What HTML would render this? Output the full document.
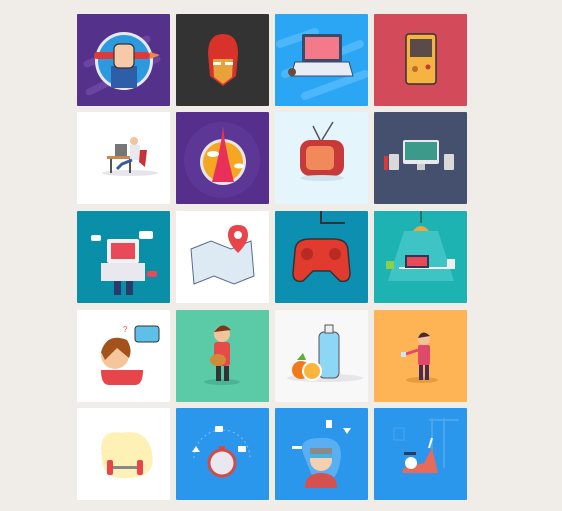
<!DOCTYPE html>
<html><head><meta charset="utf-8"><style>
html,body{margin:0;padding:0;width:562px;height:511px;background:#f0ede9;overflow:hidden}
.t{position:absolute;width:93px;height:92px;overflow:hidden;border-radius:1px}
.t svg{width:93px;height:92px;display:block}
</style></head><body>
<!-- row 1 -->
<div class="t" style="left:77px;top:14px;background:#54318a"><svg viewBox="0 0 93 92">
<path d="M10 50 L70 25 M12 78 L80 45" stroke="#6a44a3" stroke-width="7" stroke-linecap="round"/>
<circle cx="47" cy="47" r="29" fill="#e8e8f0"/><circle cx="47" cy="47" r="26" fill="#2d9ae0"/>
<rect x="34" y="52" width="26" height="22" fill="#2f5ea8"/>
<rect x="17" y="38" width="56" height="7" rx="3" fill="#e0393b"/><path d="M73 38 L83 41 L73 45Z" fill="#f08a3a"/>
<rect x="37" y="30" width="20" height="24" rx="5" fill="#f6c9a8" stroke="#333" stroke-width="1.2"/>
</svg></div>
<div class="t" style="left:176px;top:14px;background:#333333"><svg viewBox="0 0 93 92">
<path d="M32 40 Q32 20 47 20 Q62 20 62 40 L60 62 L47 72 L34 62Z" fill="#d8322a"/>
<path d="M37 45 L57 45 L56 63 L47 70 L38 63Z" fill="#e9a23b"/>
<rect x="37" y="48" width="8" height="3" fill="#fff"/><rect x="49" y="48" width="8" height="3" fill="#fff"/>
</svg></div>
<div class="t" style="left:275px;top:14px;background:#2ba6f5"><svg viewBox="0 0 93 92">
<path d="M5 30 L40 18 M10 60 L85 30 M30 82 L90 60" stroke="#4cb7fa" stroke-width="8" stroke-linecap="round"/>
<rect x="27" y="20" width="40" height="28" rx="2" fill="#3a4a6a"/><rect x="30" y="23" width="34" height="22" fill="#f47a8a"/>
<path d="M20 48 L74 48 L78 62 L16 62Z" fill="#e8edf5" stroke="#3a4a6a"/>
<circle cx="17" cy="58" r="4" fill="#6a4a3a"/>
</svg></div>
<div class="t" style="left:374px;top:14px;background:#d34a5a"><svg viewBox="0 0 93 92">
<rect x="32" y="20" width="30" height="50" rx="3" fill="#f5b342" stroke="#333" stroke-width="1.5"/>
<rect x="36" y="25" width="22" height="18" fill="#5a4a4a"/>
<circle cx="41" cy="55" r="3" fill="#c46a2a"/><circle cx="54" cy="53" r="2.5" fill="#c43a3a"/>
</svg></div>
<!-- row 2 -->
<div class="t" style="left:77px;top:112px;background:#ffffff"><svg viewBox="0 0 93 92">
<ellipse cx="53" cy="61" rx="28" ry="3" fill="#e6e6ea"/>
<rect x="30" y="44" width="30" height="3" fill="#c8894a"/><rect x="38" y="32" width="12" height="12" fill="#777"/>
<rect x="33" y="47" width="2" height="14" fill="#555"/><rect x="52" y="47" width="2" height="14" fill="#555"/>
<circle cx="57" cy="29" r="4" fill="#f1c49d"/><rect x="53" y="33" width="10" height="15" fill="#e8e8ef"/>
<path d="M63 38 L70 38 L68 55 L62 50Z" fill="#c8323a"/>
<path d="M55 48 L45 52 L40 57" stroke="#3a5aa0" stroke-width="3" fill="none"/>
</svg></div>
<div class="t" style="left:176px;top:112px;background:#552f8b"><svg viewBox="0 0 93 92">
<circle cx="46" cy="48" r="38" fill="#5d3795"/>
<circle cx="47" cy="50" r="23" fill="#e6e6e6"/><circle cx="47" cy="50" r="20" fill="#f5a623"/>
<path d="M47 14 L49 30 L53 50 L58 70 L36 70 L41 50 L45 30Z" fill="#e8305a"/>
<ellipse cx="37" cy="42" rx="6" ry="3" fill="#fff"/><ellipse cx="63" cy="54" rx="5" ry="2.5" fill="#fff"/>
</svg></div>
<div class="t" style="left:275px;top:112px;background:#e5f5fc"><svg viewBox="0 0 93 92">
<path d="M45 28 L38 14 M47 28 L58 10" stroke="#555" stroke-width="1.5"/>
<rect x="25" y="28" width="44" height="36" rx="10" fill="#c83a3a"/>
<rect x="31" y="34" width="28" height="24" rx="5" fill="#f08a5a"/>
<ellipse cx="47" cy="66" rx="22" ry="3" fill="#cfe3ee"/>
</svg></div>
<div class="t" style="left:374px;top:112px;background:#45506e"><svg viewBox="0 0 93 92">
<rect x="29" y="28" width="36" height="24" rx="2" fill="#e8e8ee"/><rect x="31" y="30" width="32" height="18" fill="#3c9a8a"/>
<rect x="43" y="52" width="8" height="6" fill="#ccc"/>
<rect x="15" y="42" width="10" height="16" rx="1" fill="#d9d9d9"/><rect x="70" y="42" width="10" height="16" rx="1" fill="#d9d9d9"/>
<rect x="10" y="44" width="4" height="14" fill="#d83a3a"/>
</svg></div>
<!-- row 3 -->
<div class="t" style="left:77px;top:211px;background:#0a8fa8"><svg viewBox="0 0 93 92">
<rect x="30" y="28" width="32" height="24" rx="2" fill="#f2f2f2"/><rect x="34" y="32" width="24" height="16" fill="#e84a5a"/>
<rect x="24" y="52" width="44" height="18" fill="#e8e8ee"/>
<rect x="37" y="70" width="7" height="14" fill="#2a3a6a"/><rect x="49" y="70" width="7" height="14" fill="#2a3a6a"/>
<rect x="62" y="20" width="14" height="8" rx="2" fill="#fff"/><rect x="14" y="24" width="10" height="6" rx="2" fill="#fff"/><rect x="70" y="60" width="10" height="6" rx="2" fill="#e84a5a"/>
</svg></div>
<div class="t" style="left:176px;top:211px;background:#ffffff"><svg viewBox="0 0 93 92">
<path d="M15 38 L35 30 L55 38 L75 30 L78 65 L58 73 L38 65 L18 73Z" fill="#dde9f3" stroke="#5a6a8a"/>
<path d="M62 14 Q72 14 72 24 Q72 32 62 42 Q52 32 52 24 Q52 14 62 14Z" fill="#e8454a"/><circle cx="62" cy="24" r="4" fill="#fff"/>
</svg></div>
<div class="t" style="left:275px;top:211px;background:#0c8fb0"><svg viewBox="0 0 93 92">
<path d="M46 0 L46 12 L70 12" stroke="#333" stroke-width="2" fill="none"/>
<path d="M20 40 Q20 28 35 28 L58 28 Q73 28 73 40 L75 62 Q75 72 65 70 L55 60 L38 60 L28 70 Q18 72 18 62Z" fill="#e13a2f" stroke="#333" stroke-width="1.5"/>
<circle cx="32" cy="43" r="6" fill="#b82a22"/><circle cx="60" cy="43" r="6" fill="#b82a22"/>
</svg></div>
<div class="t" style="left:374px;top:211px;background:#1eb3b3"><svg viewBox="0 0 93 92">
<path d="M47 0 V12" stroke="#333"/><path d="M39 20 Q47 10 55 20Z" fill="#f3a43a"/>
<path d="M30 20 L64 20 L80 70 L14 70Z" fill="#3ec4c4"/>
<rect x="25" y="56" width="50" height="2" fill="#fff"/>
<rect x="31" y="44" width="24" height="13" fill="#2a3a5a"/><rect x="33" y="46" width="20" height="9" fill="#e84a5a"/>
<rect x="12" y="50" width="8" height="8" fill="#8ad04a"/><rect x="73" y="48" width="8" height="10" fill="#eee"/>
</svg></div>
<!-- row 4 -->
<div class="t" style="left:77px;top:310px;background:#ffffff"><svg viewBox="0 0 93 92">
<path d="M24 60 Q24 75 32 75 L58 75 Q66 75 66 60Z" fill="#e8454a"/>
<circle cx="38" cy="45" r="14" fill="#f5c59b"/><path d="M24 42 Q30 22 50 30 Q56 40 52 48 L40 38 L28 50Z" fill="#a3521c"/>
<rect x="58" y="16" width="24" height="16" rx="3" fill="#5ec0e8" stroke="#333"/>
<text x="46" y="22" font-size="8" fill="#e84a5a" font-family="Liberation Sans">?</text>
</svg></div>
<div class="t" style="left:176px;top:310px;background:#5acaa7"><svg viewBox="0 0 93 92">
<ellipse cx="46" cy="72" rx="18" ry="3" fill="#4ab394"/>
<circle cx="46" cy="24" r="8" fill="#f3c39b"/><path d="M38 22 Q46 10 55 20Z" fill="#7a3a1a"/>
<rect x="38" y="32" width="16" height="24" rx="3" fill="#e84a4a"/>
<ellipse cx="42" cy="50" rx="8" ry="6" fill="#d08a3a"/>
<rect x="40" y="56" width="5" height="15" fill="#333"/><rect x="48" y="56" width="5" height="15" fill="#333"/>
</svg></div>
<div class="t" style="left:275px;top:310px;background:#f8f8f8"><svg viewBox="0 0 93 92">
<ellipse cx="50" cy="68" rx="38" ry="4" fill="#e6e6ea"/>
<rect x="44" y="22" width="20" height="46" rx="5" fill="#8ed6f5" stroke="#555"/><rect x="50" y="15" width="8" height="8" fill="#eee" stroke="#555"/>
<circle cx="26" cy="60" r="9" fill="#f07a1a"/><circle cx="37" cy="61" r="9" fill="#fbb53a" stroke="#fff" stroke-width="2"/>
<path d="M22 50 L28 43 L31 50Z" fill="#5ab03a"/>
</svg></div>
<div class="t" style="left:374px;top:310px;background:#feb454"><svg viewBox="0 0 93 92">
<ellipse cx="48" cy="70" rx="16" ry="3" fill="#e59c3a"/>
<circle cx="50" cy="29" r="6" fill="#f3c39b"/><path d="M44 28 Q48 18 56 26Z" fill="#4a2a2a"/>
<rect x="44" y="35" width="12" height="20" rx="2" fill="#e04a6a"/>
<rect x="45" y="55" width="4" height="15" fill="#4a2a5a"/><rect x="51" y="55" width="4" height="15" fill="#4a2a5a"/>
<path d="M44 40 L32 44" stroke="#e04a6a" stroke-width="3"/><rect x="27" y="42" width="5" height="5" fill="#cfe8f5"/>
</svg></div>
<!-- row 5 -->
<div class="t" style="left:77px;top:408px;background:#ffffff"><svg viewBox="0 0 93 92">
<path d="M25 50 Q20 20 45 25 Q70 20 75 45 Q80 70 50 70 Q25 72 25 50Z" fill="#fff1b5"/>
<rect x="30" y="58" width="36" height="3" fill="#888"/>
<rect x="30" y="52" width="6" height="15" rx="2" fill="#e8454a"/><rect x="60" y="52" width="6" height="15" rx="2" fill="#e8454a"/>
</svg></div>
<div class="t" style="left:176px;top:408px;background:#2b97ec"><svg viewBox="0 0 93 92">
<path d="M18 50 A28 28 0 0 1 74 50" stroke="#7fc0f5" stroke-width="1" fill="none" stroke-dasharray="2 3"/>
<circle cx="46" cy="55" r="13" fill="#e8e8ee" stroke="#d34a4a" stroke-width="3"/>
<rect x="43" y="38" width="6" height="4" fill="#d34a4a"/>
<rect x="39" y="18" width="8" height="6" rx="1" fill="#fff"/><rect x="62" y="38" width="8" height="6" fill="#fff"/><path d="M20 38 L24 44 L16 44Z" fill="#fff"/>
</svg></div>
<div class="t" style="left:275px;top:408px;background:#2b97ec"><svg viewBox="0 0 93 92">
<path d="M30 50 Q20 30 45 30 Q70 28 65 55 Q60 80 40 75Z" fill="#5aaff2"/>
<path d="M30 80 Q30 65 46 65 Q62 65 62 80Z" fill="#d4514e"/>
<circle cx="46" cy="52" r="11" fill="#f5d0b0"/><rect x="35" y="40" width="22" height="7" fill="#8a8a8a"/><rect x="35" y="46" width="22" height="4" fill="#4ab0e0"/>
<rect x="51" y="12" width="6" height="8" fill="#fff"/><path d="M68 20 L76 20 L72 26Z" fill="#fff"/><rect x="17" y="38" width="10" height="3" fill="#fff"/>
</svg></div>
<div class="t" style="left:374px;top:408px;background:#2b97ec"><svg viewBox="0 0 93 92">
<path d="M58 10 L58 60 M70 10 L70 60 M55 12 L85 12" stroke="#4aa6ec" stroke-width="2"/>
<rect x="20" y="20" width="10" height="12" fill="none" stroke="#4aa6ec"/>
<path d="M28 65 L64 65 L58 40 L50 55 L30 60Z" fill="#ea6a5a"/>
<circle cx="37" cy="55" r="6" fill="#fff"/><rect x="30" y="44" width="12" height="3" fill="#2a3a5a"/>
<path d="M55 40 L58 30" stroke="#fff" stroke-width="2"/>
</svg></div>
</body></html>
